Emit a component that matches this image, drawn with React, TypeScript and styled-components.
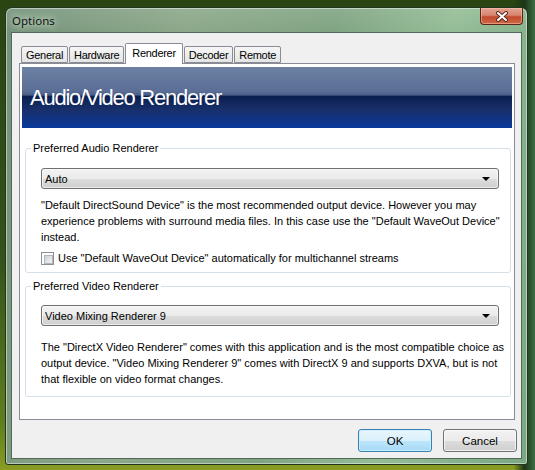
import React from 'react';
import styled, { createGlobalStyle } from 'styled-components';

const GlobalStyle = createGlobalStyle`
  html, body {
    margin: 0;
    padding: 0;
  }
  body {
    font-family: "Liberation Sans", Arial, sans-serif;
    font-size: 11px;
    color: #000;
  }
  * {
    box-sizing: border-box;
  }
`;

const tabs = ['General', 'Hardware', 'Renderer', 'Decoder', 'Remote'];

const audioText = [
    '"Default DirectSound Device" is the most recommended output device. However you may',
    'experience problems with surround media files. In this case use the "Default WaveOut Device"',
    'instead.',
];

const videoText = [
    'The "DirectX Video Renderer" comes with this application and is the most compatible choice as',
    'output device. "Video Mixing Renderer 9" comes with DirectX 9 and supports DXVA, but is not',
    'that flexible on video format changes.',
];

export default function App() {
    return (
        <>
            <GlobalStyle />
            <Desktop>
                <Window>
                    <TitleBar>
                        <Title>Options</Title>
                        <CloseButton type='button' aria-label='Close'>
                            <svg width='14' height='11' viewBox='0 0 14 11'>
                                <path d='M3 2 L11 9 M11 2 L3 9' stroke='#5a2a20' strokeWidth='4' strokeLinecap='round' />
                                <path d='M3 2 L11 9 M11 2 L3 9' stroke='#fff' strokeWidth='2' strokeLinecap='round' />
                            </svg>
                        </CloseButton>
                    </TitleBar>

                    <Client>
                        <TabRow>
                            {tabs.map((tab) => (
                                <Tab key={tab} active={tab === 'Renderer'}>{tab}</Tab>
                            ))}
                        </TabRow>

                        <Pane>
                            <Banner>Audio/Video Renderer</Banner>

                            <Groups>
                                <Group>
                                    <Legend>Preferred Audio Renderer</Legend>
                                    <Combo>
                                        <span>Auto</span>
                                        <Arrow />
                                    </Combo>
                                    <Description gap={8}>
                                        {audioText.map((line) => <Line key={line}>{line}</Line>)}
                                    </Description>
                                    <CheckRow>
                                        <CheckBox />
                                        <span>Use "Default WaveOut Device" automatically for multichannel streams</span>
                                    </CheckRow>
                                </Group>

                                <Group spaced>
                                    <Legend>Preferred Video Renderer</Legend>
                                    <Combo>
                                        <span>Video Mixing Renderer 9</span>
                                        <Arrow />
                                    </Combo>
                                    <Description gap={13}>
                                        {videoText.map((line) => <Line key={line}>{line}</Line>)}
                                    </Description>
                                </Group>
                            </Groups>
                        </Pane>

                        <ButtonRow>
                            <Button type='button' isDefault>OK</Button>
                            <Button type='button'>Cancel</Button>
                        </ButtonRow>
                    </Client>
                </Window>
            </Desktop>
        </>
    );
}

const Desktop = styled.div`
  width: 535px;
  height: 470px;
  padding: 7px 7px 5px 5px;
  display: flex;
  background:
    linear-gradient(to right, rgba(0, 0, 0, 0) 96%, #1c3516 98%, #3e6e46 100%),
    linear-gradient(to bottom, #2a4412 0%, #34521a 55%, #5f7e1e 90%, #8a9c22 100%);
`;

const Window = styled.div`
  flex: 1;
  min-width: 0;
  display: flex;
  flex-direction: column;
  padding: 0 5px 5px 5px;
  border: 1px solid #22361f;
  border-radius: 7px 7px 3px 3px;
  box-shadow: inset 0 0 0 1px rgba(255, 255, 255, 0.45);
  background:
    linear-gradient(to bottom, rgba(255, 255, 255, 0.1), rgba(255, 255, 255, 0) 24px),
    linear-gradient(100deg, #74927a 0%, #8ca88a 30%, #80a482 55%, #94bd96 75%, #7aa882 100%);
`;

const TitleBar = styled.div`
  height: 24px;
  margin: 0 -5px;
  padding: 0 4px 0 6px;
  display: flex;
  align-items: center;
  justify-content: space-between;
`;

const Title = styled.span`
  font-family: "Noto Sans", "Liberation Sans", sans-serif;
  font-size: 11.5px;
  color: #111;
  padding-top: 1px;
  text-shadow: 0 0 6px rgba(230, 240, 225, 0.95), 0 0 10px rgba(230, 240, 225, 0.8);
`;

const CloseButton = styled.button`
  align-self: flex-start;
  width: 43px;
  height: 17px;
  padding: 0;
  display: flex;
  align-items: center;
  justify-content: center;
  border: 1px solid #5b2518;
  border-top: none;
  border-radius: 0 0 4px 4px;
  box-shadow: inset 0 0 0 1px rgba(255, 200, 180, 0.5);
  background: linear-gradient(to bottom, #e3a594 0%, #d88570 45%, #c24a2e 55%, #cf6a45 100%);
`;

const Client = styled.div`
  flex: 1;
  min-width: 0;
  display: flex;
  flex-direction: column;
  padding: 10px 6px 6px 7px;
  border: 1px solid #51685a;
  background: #f0f0f0;
`;

const TabRow = styled.div`
  height: 20px;
  display: flex;
  align-items: flex-end;
  gap: 1px;
  padding-left: 2px;
  position: relative;
  z-index: 1;
`;

const Tab = styled.div<{ active?: boolean }>`
  height: ${({ active }) => (active ? '21px' : '17px')};
  margin-bottom: ${({ active }) => (active ? '-1px' : '0')};
  padding: 0 ${({ active }) => (active ? '6px' : '4px')};
  padding-bottom: ${({ active }) => (active ? '2px' : '0')};
  display: flex;
  align-items: center;
  letter-spacing: -0.3px;
  border: 1px solid #898c95;
  border-bottom: ${({ active }) => (active ? 'none' : '1px solid #898c95')};
  border-radius: 2px 2px 0 0;
  background: ${({ active }) => (active ? '#fff' : 'linear-gradient(to bottom, #f6f6f6, #e4e4e4)')};
`;

const Pane = styled.div`
  flex: 1;
  min-width: 0;
  display: flex;
  flex-direction: column;
  padding: 3px 2px 0 2px;
  border: 1px solid #898c95;
  background: #fff;
`;

const Banner = styled.div`
  height: 61px;
  padding-left: 8px;
  display: flex;
  align-items: center;
  color: #fff;
  font-size: 22px;
  letter-spacing: -1.25px;
  background: linear-gradient(to bottom, #6d81a3 0%, #5a6e96 40%, #4a5d86 46%, #0b1f50 48%, #182f6a 70%, #0a3a9c 100%);
`;

const Groups = styled.div`
  display: flex;
  flex-direction: column;
  min-width: 0;
  padding: 14px 1px 0 3px;
`;

const Group = styled.fieldset<{ spaced?: boolean }>`
  margin: ${({ spaced }) => (spaced ? '7px' : '0')} 0 0 0;
  padding: ${({ spaced }) => (spaced ? '12px 11px 9px 15px' : '13px 11px 6px 15px')};
  border: 1px solid #d5dfe5;
  border-radius: 3px;
  min-width: 0;
`;

const Legend = styled.legend`
  margin-left: -10px;
  padding: 0 2px;
  line-height: 13px;
`;

const Combo = styled.div`
  height: 21px;
  padding: 0 8px 0 3px;
  display: flex;
  align-items: center;
  justify-content: space-between;
  border: 1px solid #707070;
  border-radius: 3px;
  background: linear-gradient(to bottom, #f2f2f2 0%, #ebebeb 50%, #dddddd 50%, #cfcfcf 100%);
  box-shadow: inset 0 0 0 1px rgba(255, 255, 255, 0.6);
`;

const Arrow = styled.span`
  width: 0;
  height: 0;
  border-left: 4px solid transparent;
  border-right: 4px solid transparent;
  border-top: 4px solid #000;
`;

const Description = styled.p<{ gap: number }>`
  margin: ${({ gap }) => gap}px 0 0 0;
  line-height: 16px;
`;

const Line = styled.span`
  display: block;
  white-space: nowrap;
`;

const CheckRow = styled.label`
  margin-top: 5px;
  height: 16px;
  display: flex;
  align-items: center;
  gap: 4px;
`;

const CheckBox = styled.span`
  width: 13px;
  height: 13px;
  border: 1px solid #8e8f8f;
  padding: 2px;
  background: #fff;

  &::after {
    content: '';
    display: block;
    width: 100%;
    height: 100%;
    border: 1px solid #b2b6bb;
    background: linear-gradient(135deg, #cdd1d6, #f4f4f4);
  }
`;

const ButtonRow = styled.div`
  margin: 9px -2px 0 0;
  display: flex;
  justify-content: flex-end;
  gap: 11px;
`;

const Button = styled.button<{ isDefault?: boolean }>`
  width: 74px;
  height: 23px;
  padding: 0;
  font-family: "Liberation Sans", Arial, sans-serif;
  font-size: 11.5px;
  color: #000;
  border: 1px solid ${({ isDefault }) => (isDefault ? '#3c7fb1' : '#707070')};
  border-radius: 3px;
  box-shadow: inset 0 0 0 1px ${({ isDefault }) => (isDefault ? 'rgba(200, 240, 255, 0.9)' : 'rgba(255, 255, 255, 0.7)')};
  background: ${({ isDefault }) =>
    isDefault
      ? 'linear-gradient(to bottom, #eaf6fd 0%, #d9f0fc 50%, #bee6fd 50%, #a7d9f5 100%)'
      : 'linear-gradient(to bottom, #f2f2f2 0%, #ebebeb 50%, #dddddd 50%, #cfcfcf 100%)'};
`;
